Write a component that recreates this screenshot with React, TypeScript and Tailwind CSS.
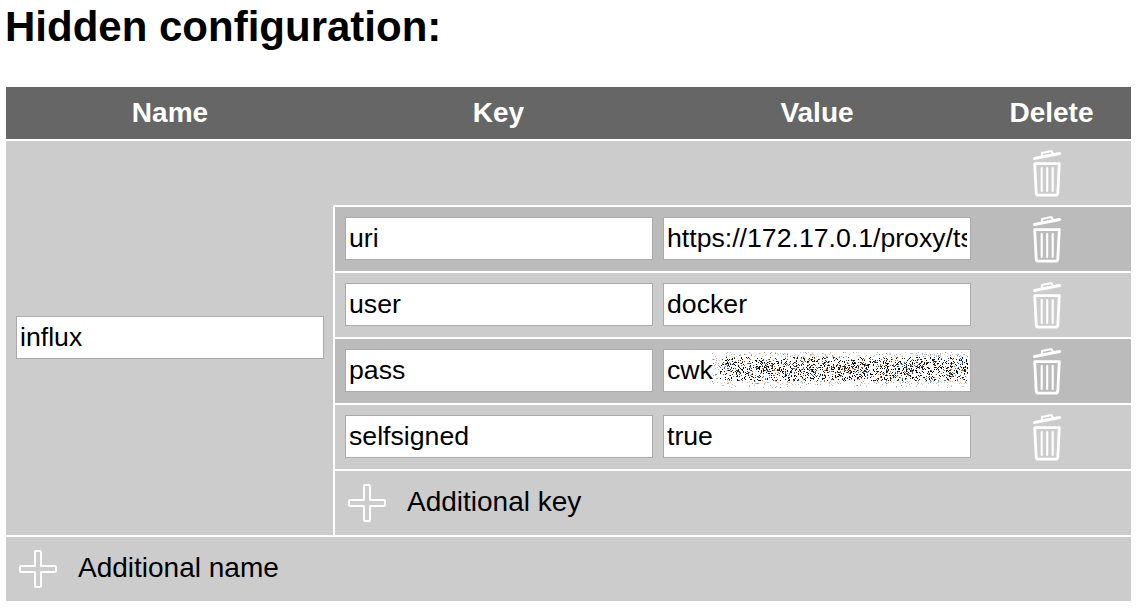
type Entry = { k: string; v: string; dark?: boolean; noise?: boolean };

const entries: Entry[] = [
  { k: "uri", v: "https://172.17.0.1/proxy/tsdb", dark: true },
  { k: "user", v: "docker" },
  { k: "pass", v: "cwk", dark: true, noise: true },
  { k: "selfsigned", v: "true" },
];

const inputCls =
  "block h-[43px] w-[308px] border border-[#aaaaaa] bg-white px-[3px] text-[26.67px] text-black outline-none";

function TrashIcon() {
  return (
    <svg width="30" height="49" viewBox="0 0 30 49" fill="none" stroke="#fff" strokeLinecap="round" strokeLinejoin="round">
      <path d="M2.5 9.5 L27.5 4.5" strokeWidth="3" />
      <path d="M10 7 L10 4 L19.5 2 L21 5" strokeWidth="2" />
      <path d="M2.7 14.7 H27.3 L25.8 44 Q25.6 46.2 23.5 46.2 H6.5 Q4.4 46.2 4.2 44 Z" strokeWidth="2.8" />
      <path d="M9.7 19 V42 M15.2 19 V42 M20.7 19 V42" strokeWidth="2.1" />
    </svg>
  );
}

function PlusIcon() {
  return (
    <svg width="38" height="38" viewBox="0 0 38 38" fill="none" stroke="#fff" strokeWidth="1.9" strokeLinejoin="round" className="translate-y-px">
      <path d="M16 2 Q16 1 17 1 H21 Q22 1 22 2 V16 H36 Q37 16 37 17 V21 Q37 22 36 22 H22 V36 Q22 37 21 37 H17 Q16 37 16 36 V22 H2 Q1 22 1 21 V17 Q1 16 2 16 H16 Z" />
    </svg>
  );
}

// 伏せ字部分のノイズ（シード固定）
function Noise() {
  const dots: { x: number; y: number; c: string }[] = [];
  let seed = 1337;
  const rnd = () => {
    seed = (seed * 1103515245 + 12345) & 0x7fffffff;
    return seed / 0x7fffffff;
  };
  const dark = ["#000", "#000", "#000", "#111", "#222", "#1a6fc0", "#c8640a", "#555"];
  const light = ["#aaa", "#bbb", "#ccc", "#9cc4e8", "#e8c89c", "#888"];
  for (let i = 0; i < 2400; i++) {
    const x = Math.floor(rnd() * 256);
    const off = (rnd() + rnd() + rnd() + rnd() - 2) * 17;
    const y = Math.floor(18 + off);
    if (y < 1 || y > 36) continue;
    if (x < 14 && rnd() < 0.5) continue;
    const pool = Math.abs(off) > 12 || x < 8 ? light : dark;
    dots.push({ x, y, c: pool[Math.floor(rnd() * pool.length)] });
  }
  return (
    <svg width="256" height="38" className="absolute left-[49px] top-[2px]">
      {dots.map((d, i) => (
        <rect key={i} x={d.x} y={d.y} width="1" height="1" fill={d.c} />
      ))}
    </svg>
  );
}

function KeyRow({ entry }: { entry: Entry }) {
  return (
    <div className={`flex h-[66px] items-start border-t-2 border-l-2 border-white pl-[10px] pt-[10px] ${entry.dark ? "bg-[#bbbbbb]" : ""}`}>
      <input readOnly value={entry.k} className={inputCls} />
      <div className="relative ml-[10px]">
        <input readOnly value={entry.v} className={inputCls} />
        {entry.noise && <Noise />}
      </div>
      <div className="-mt-[2px] ml-[61px]">
        <TrashIcon />
      </div>
    </div>
  );
}

export default function App() {
  return (
    <div className="w-[1131px] pl-[6px] text-black [font-family:'Liberation_Sans',Arial,sans-serif]">
      <h1 className="-ml-px h-[87px] pt-[3px] text-[42px] leading-[48px] font-bold">Hidden configuration:</h1>

      <div className="flex h-[52px] items-center bg-[#666666] text-center text-[28px] font-bold text-white">
        <div className="w-[328px]">Name</div>
        <div className="ml-px w-[327px]">Key</div>
        <div className="ml-px w-[308px]">Value</div>
        <div className="ml-px w-[159px]">Delete</div>
      </div>

      <div className="mt-[2px] flex bg-[#cccccc]">
        <div className="flex w-[327px] items-center pb-[2px] pl-[10px]">
          <input readOnly value="influx" className={inputCls} />
        </div>
        <div className="flex-1">
          <div className="flex h-[64px] items-start justify-end pr-[69px] pt-[8px]">
            <TrashIcon />
          </div>
          {entries.map((e) => (
            <KeyRow key={e.k} entry={e} />
          ))}
          <div className="flex h-[66px] items-center gap-[21px] border-t-2 border-l-2 border-white pb-[2px] pl-[13px] text-[28px]">
            <PlusIcon />
            <span>Additional key</span>
          </div>
        </div>
      </div>

      <div className="mt-[2px] flex h-[64px] items-center gap-[21px] bg-[#cccccc] pb-[2px] pl-[13px] text-[28px]">
        <PlusIcon />
        <span>Additional name</span>
      </div>
    </div>
  );
}
